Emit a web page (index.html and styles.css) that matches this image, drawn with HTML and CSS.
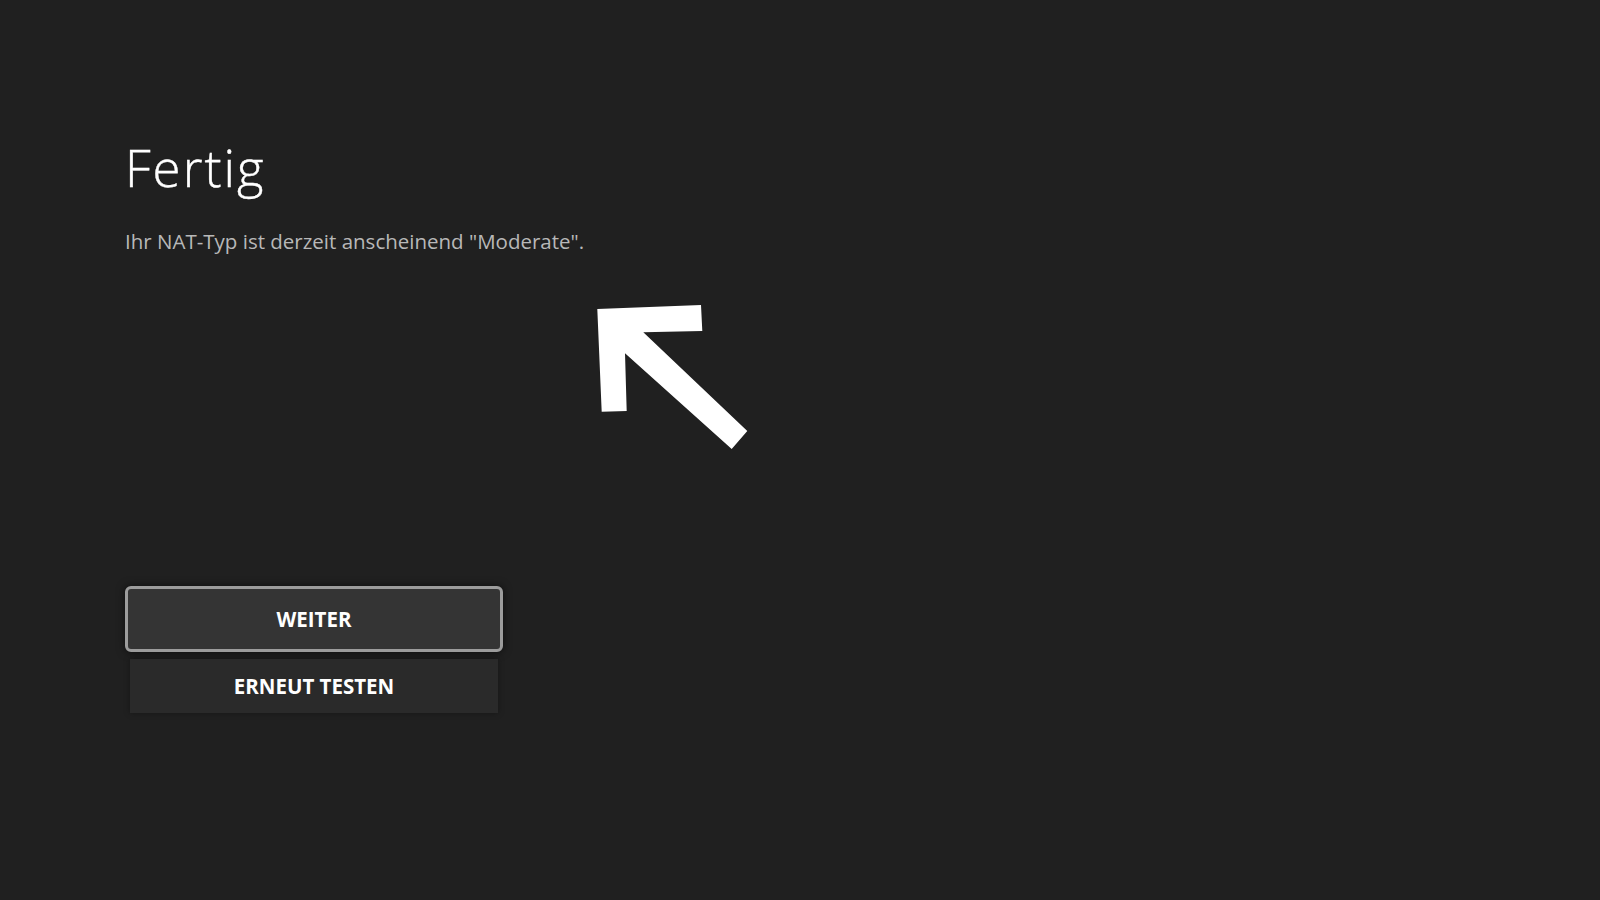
FILE: index.html
```html
<!DOCTYPE html>
<html lang="de">
<head>
<meta charset="utf-8">
<title>Fertig</title>
<link rel="stylesheet" href="styles.css">
</head>
<body>
<main class="screen">
  <section class="content">
    <h1 class="title">Fertig</h1>
    <p class="subtitle">Ihr NAT-Typ ist derzeit anscheinend "Moderate".</p>
    <div class="actions">
      <button class="btn btn-focused">WEITER</button>
      <button class="btn btn-plain">ERNEUT TESTEN</button>
    </div>
  </section>
  <svg class="arrow" width="170" height="160" viewBox="590 295 170 160" aria-hidden="true">
    <polygon fill="#ffffff" points="597.3,309 701,305 702.3,331 643.3,332.3 747.3,431 731.7,449 625,353.3 626.7,411 601.7,411.7"/>
  </svg>
</main>
</body>
</html>
```
FILE: styles.css
```css
html, body {
  margin: 0;
  padding: 0;
  background: #202020;
}
.screen {
  position: relative;
  width: 1600px;
  height: 900px;
  overflow: hidden;
  font-family: "Open Sans", "Noto Sans", sans-serif;
}
.content {
  padding: 134px 0 0 125px;
  display: flex;
  flex-direction: column;
  align-items: flex-start;
}
.title {
  margin: 0;
  font-size: 51px;
  font-weight: 300;
  letter-spacing: 2px;
  line-height: 66px;
  color: #ffffff;
  -webkit-text-stroke: 0.4px #ffffff;
}
.subtitle {
  margin: 27px 0 0 0;
  font-size: 20.5px;
  font-weight: 400;
  letter-spacing: 0;
  line-height: 28px;
  color: #b8b8b8;
}
.actions {
  margin-top: 331px;
  display: flex;
  flex-direction: column;
  gap: 7px;
}
.btn {
  width: 378px;
  font-family: "Open Sans", "Noto Sans", sans-serif;
  font-weight: 700;
  font-size: 20.5px;
  color: #ffffff;
  cursor: pointer;
}
.btn-focused {
  height: 66px;
  background: #343434;
  border: 3px solid #9c9c9c;
  border-radius: 6px;
  box-shadow: 0 0 8px rgba(0,0,0,0.6);
}
.btn-plain {
  margin-left: 5px;
  width: 368px;
  height: 54px;
  background: #2a2a2a;
  border: none;
  border-radius: 0;
  box-shadow: 0 0 6px rgba(0,0,0,0.35);
}
.arrow {
  position: absolute;
  left: 590px;
  top: 295px;
}
```
